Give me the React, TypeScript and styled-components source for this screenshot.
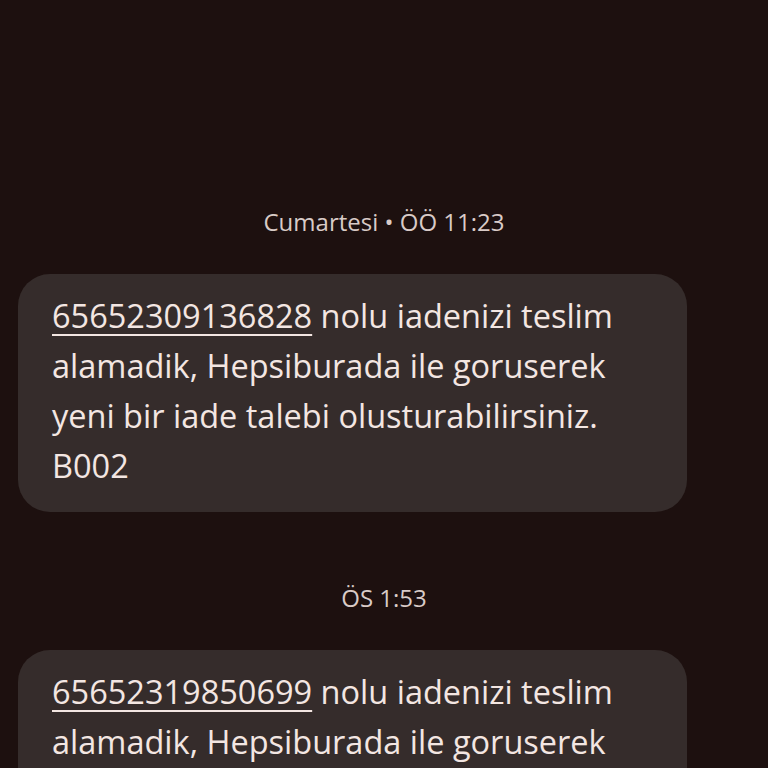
import styled, { createGlobalStyle } from "styled-components";

const GlobalStyle = createGlobalStyle`
  html, body {
    margin: 0;
    padding: 0;
    background: #1d100f;
    height: 768px;
    overflow: hidden;
  }
  * {
    box-sizing: border-box;
  }
`;

const Thread = styled.div`
  display: flex;
  flex-direction: column;
  padding: 207px 81px 0 18px;
  font-family: "Open Sans", "Noto Sans", sans-serif;
`;

const Stamp = styled.div<{ $first?: boolean }>`
  margin: ${(p) => (p.$first ? "0" : "71px")} -81px 37px -18px;
  height: 30px;
  line-height: 30px;
  text-align: center;
  font-size: 24px;
  color: #d9cbc7;
`;

const Bubble = styled.div`
  background: #352c2b;
  border-radius: 32px;
  padding: 17px 40px 21px 34px;
  font-size: 32.5px;
  line-height: 50px;
  color: #f3e6e2;
`;

const Ref = styled.span`
  text-decoration: underline;
  text-decoration-thickness: 2px;
  text-underline-offset: 6px;
`;

const messages = [
  { stamp: "Cumartesi • ÖÖ 11:23", ref: "65652309136828" },
  { stamp: "ÖS 1:53", ref: "65652319850699" },
];

export default function App() {
  return (
    <>
      <GlobalStyle />
      <Thread>
        {messages.map((m, i) => (
          <div key={m.ref} style={{ display: "contents" }}>
            <Stamp $first={i === 0}>{m.stamp}</Stamp>
            <Bubble>
              <Ref>{m.ref}</Ref> nolu iadenizi teslim alamadik, Hepsiburada
              ile goruserek yeni bir iade talebi olusturabilirsiniz. B002
            </Bubble>
          </div>
        ))}
      </Thread>
    </>
  );
}
